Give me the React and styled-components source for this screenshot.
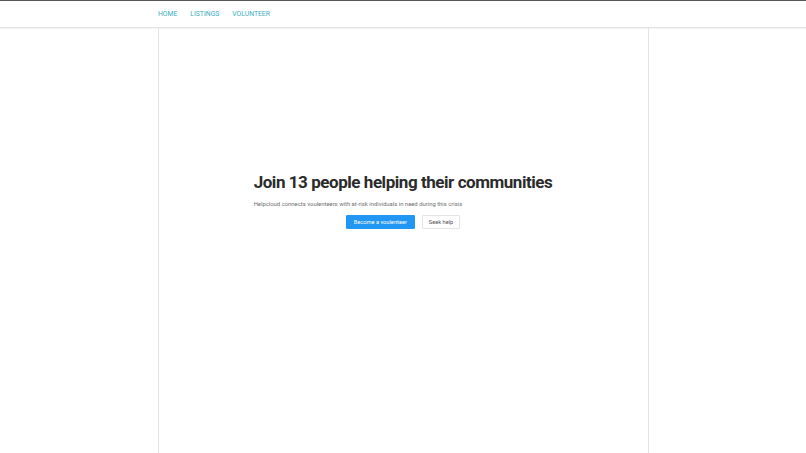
import React from "react";
import styled, { createGlobalStyle } from "styled-components";

const Global = createGlobalStyle`
  html, body { margin: 0; padding: 0; background: #fff; }
  body { font-family: Roboto, "Noto Sans", Arial, sans-serif; }
  * { box-sizing: border-box; }
`;

const Page = styled.div`
  min-height: 453px;
  border-top: 1px solid #555;
  display: flex;
  flex-direction: column;
`;

const Header = styled.header`
  height: 27px;
  border-bottom: 1px solid #e2e2e2;
  box-shadow: 0 1px 1px rgba(0, 0, 0, 0.04);
`;

const Nav = styled.nav`
  width: 490px;
  margin: 0 auto;
  height: 100%;
  display: flex;
  align-items: center;
  gap: 13px;
`;

const NavLink = styled.a`
  font-size: 6.8px;
  color: #3aaebf;
  text-transform: uppercase;
  text-decoration: none;
`;

const Main = styled.main`
  flex: 1;
  width: 491px;
  margin: 0 auto;
  border-left: 1px solid #e4e4e4;
  border-right: 1px solid #e4e4e4;
  display: flex;
  justify-content: center;
  padding-top: 144px;
`;

const Hero = styled.section`
  width: fit-content;
`;

const Title = styled.h1`
  margin: 0;
  font-size: 17px;
  letter-spacing: -0.45px;
  font-weight: 700;
  color: #2b2b2b;
  line-height: 20px;
`;

const Lead = styled.p`
  margin: 9px 0 8px;
  font-size: 5.9px;
  color: #707070;
`;

const Actions = styled.div`
  display: flex;
  justify-content: center;
  gap: 7px;
`;

const Button = styled.button`
  height: 14px;
  padding: 0 ${(p) => (p.$primary ? 7 : 6)}px;
  font-family: inherit;
  font-size: 5.7px;
  border-radius: 1px;
  cursor: pointer;
  border: 1px solid ${(p) => (p.$primary ? "#2196f3" : "#e3e3e3")};
  background: ${(p) => (p.$primary ? "#2196f3" : "#fff")};
  color: ${(p) => (p.$primary ? "#fff" : "#555")};
`;

export default function App() {
  return (
    <>
      <Global />
      <Page>
        <Header>
          <Nav>
            <NavLink href="#">Home</NavLink>
            <NavLink href="#">Listings</NavLink>
            <NavLink href="#">Volunteer</NavLink>
          </Nav>
        </Header>
        <Main>
          <Hero>
            <Title>Join 13 people helping their communities</Title>
            <Lead>
              Helpcloud connects voulenteers with at-risk individuals in need
              during this crisis
            </Lead>
            <Actions>
              <Button $primary>Become a voulenteer</Button>
              <Button>Seek help</Button>
            </Actions>
          </Hero>
        </Main>
      </Page>
    </>
  );
}
